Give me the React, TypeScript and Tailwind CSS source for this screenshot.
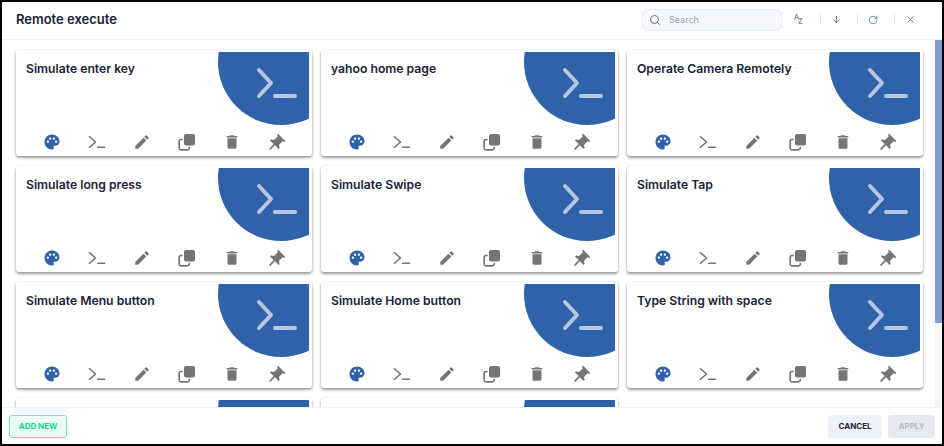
import React from 'react';
import { Search, ArrowDown, RotateCw, X } from 'lucide-react';
import { MdPalette, MdEdit, MdDelete, MdPushPin } from 'react-icons/md';

const FONT = '[font-family:Inter,"Noto_Sans",sans-serif]';

const SCRIPTS = [
  'Simulate enter key',
  'yahoo home page',
  'Operate Camera Remotely',
  'Simulate long press',
  'Simulate Swipe',
  'Simulate Tap',
  'Simulate Menu button',
  'Simulate Home button',
  'Type String with space',
  '',
  '',
];

const TerminalIcon = ({ className = '' }: { className?: string }) => (
  <svg viewBox="0 0 24 18" className={className} fill="none" stroke="currentColor" strokeWidth="2.200" strokeLinecap="round" strokeLinejoin="round">
    <path d="M2 2l8 7-8 7" />
    <path d="M13 16h9" />
  </svg>
);

const CopyIcon = () => (
  <svg viewBox="0 0 18 18" className="w-[18px] h-[18px]">
    <rect x="6" y="1" width="11" height="11.500" rx="2" fill="#757575" />
    <path d="M4 6.500H3A1.800 1.800 0 0 0 1.200 8.300V15A1.800 1.800 0 0 0 3 16.800H9.500A1.800 1.800 0 0 0 11.300 15V14.500" fill="none" stroke="#757575" strokeWidth="1.700" strokeLinecap="round" />
  </svg>
);

const ScriptCard = ({ title }: { title: string }) => (
  <div className="relative h-[106px] rounded-[3px] bg-white shadow-[0_2px_3px_rgba(0,0,0,0.38),0_0_2px_rgba(0,0,0,0.14)] overflow-hidden">
    <svg viewBox="0 0 91 73" className="absolute right-[3px] top-[2px] w-[91px] h-[73px]">
      <circle cx="63" cy="10" r="63" fill="#2f62a9" />
      <path d="M41 18l12 13-12 13" fill="none" stroke="#b4c6e2" strokeWidth="4" strokeLinecap="round" strokeLinejoin="round" />
      <path d="M57 44h20" fill="none" stroke="#b4c6e2" strokeWidth="4" strokeLinecap="round" />
    </svg>
    <div className={`relative pl-[10px] pt-[11px] text-[12.2px] leading-[16px] font-semibold text-[#1a2238] ${FONT}`}>{title}</div>
    <div className="absolute left-[27px] top-[83px] flex items-center gap-[27px] text-[#757575]">
      <MdPalette className="w-[18px] h-[18px] text-[#2f62a9]" size={18} />
      <TerminalIcon className="w-[18px] h-[14px]" />
      <MdEdit size={18} />
      <CopyIcon />
      <MdDelete size={18} />
      <MdPushPin size={21} className="rotate-45 translate-y-[1px] -my-[2px] -ml-[3px]" />
    </div>
  </div>
);

const HeaderTool = ({ children, divider = true }: { children: React.ReactNode; divider?: boolean }) => (
  <div className={`w-[37px] h-[11px] pr-[6px] flex items-center justify-center text-[#64748b] ${divider ? 'border-r border-[#e2e8f0]' : ''}`}>
    {children}
  </div>
);

export default function App() {
  return (
    <div className={`w-[944px] h-[446px] border-2 border-black bg-white flex flex-col overflow-hidden ${FONT}`}>
      <header className="h-[38px] shrink-0 flex items-center border-b border-[#eef1f6] pb-[2px] pl-[14px] pr-[10px]">
        <h1 className="text-[13px] font-semibold text-[#1a2238]">Remote execute</h1>
        <div className="ml-auto flex items-center">
          <div className="w-[140px] h-[22px] flex items-center gap-[8px] pl-[6px] rounded-[6px] bg-[#f6f8fc] border border-[#e6ebf4] text-[#94a3b8] mr-[2px]">
            <Search size={12} className="text-[#64748b]" />
            <span className="text-[9px]">Search</span>
          </div>
          <HeaderTool>
            <span className="relative w-[10px] h-[11px] text-[7px] leading-none font-medium">
              <span className="absolute left-0 top-0">A</span>
              <span className="absolute left-[4px] top-[4px]">Z</span>
            </span>
          </HeaderTool>
          <HeaderTool>
            <ArrowDown size={11} />
          </HeaderTool>
          <HeaderTool>
            <RotateCw size={10} />
          </HeaderTool>
          <HeaderTool divider={false}>
            <X size={11} />
          </HeaderTool>
        </div>
      </header>

      <div className="relative flex-1 min-h-0 flex overflow-hidden">
        <main className="flex-1 min-h-0 overflow-hidden pl-[14px] pr-[12px] pt-[10px]">
          <div className="grid grid-cols-[296px_297px_296px] gap-x-[9px] gap-y-[10px]">
            {SCRIPTS.map((title, index) => (
              <ScriptCard key={index} title={title} />
            ))}
          </div>
        </main>
        <div className="w-[7px] shrink-0 bg-[#f4f6fa]">
          <div className="w-[7px] h-[283px] bg-[#7f9fd0]" />
        </div>
      </div>

      <footer className="h-[37px] shrink-0 flex items-center bg-white border-t border-[#eef1f6] pl-[7px] pr-[7px]">
        <button className="w-[58px] h-[23px] rounded-[3px] border border-[#6ee7c0] bg-[#ecfdf7] text-[8px] font-bold text-[#10d98f]">ADD NEW</button>
        <button className="ml-auto w-[54px] h-[23px] rounded-[3px] bg-[#eef1f8] text-[8px] font-bold text-[#1a2238]">CANCEL</button>
        <button className="ml-[6px] w-[47px] h-[23px] rounded-[3px] bg-[#e6e9f0] text-[8px] font-bold text-[#b4bccb]">APPLY</button>
      </footer>
    </div>
  );
}
